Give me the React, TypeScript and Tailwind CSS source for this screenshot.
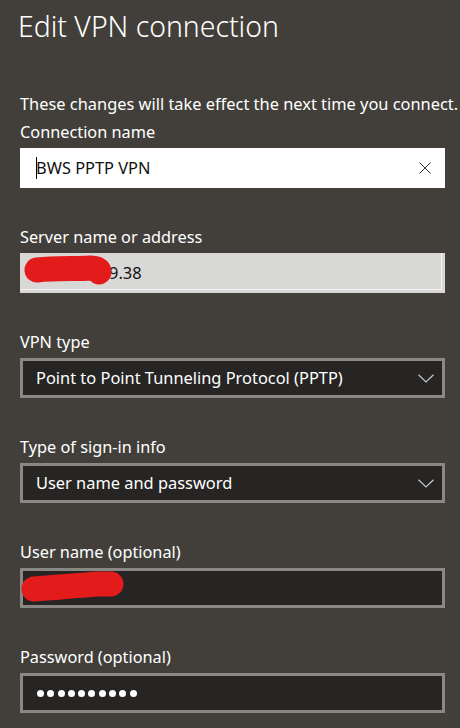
import React from "react";

const font = { fontFamily: '"Noto Sans", "Open Sans", Arial, sans-serif' };

function Label({ children }: { children: React.ReactNode }) {
  return <div className="h-[22px] leading-[22px] text-[16.3px] text-white mb-[5px]">{children}</div>;
}

function Chevron() {
  return (
    <svg width="16" height="9" viewBox="0 0 16 9" className="shrink-0">
      <polyline points="0.5,0.8 8,8 15.5,0.8" fill="none" stroke="#c8c8c8" strokeWidth="1.2" />
    </svg>
  );
}

function Dropdown({ value }: { value: string }) {
  return (
    <div className="h-[40px] w-[425px] border-[3px] border-[#8a8885] bg-[#262524] flex items-center pl-[13px] pr-[8px] justify-between">
      <span className="text-white text-[16.4px] leading-[22px]">{value}</span>
      <Chevron />
    </div>
  );
}

export default function App() {
  return (
    <div style={font} className="w-[460px] h-[728px] bg-[#423f3b] overflow-hidden px-5 pt-[8px]">
      <h1 className="text-[28.4px] leading-[36px] font-light text-white -ml-[2px]">Edit VPN connection</h1>
      <p className="mt-[49px] text-[16.4px] leading-[22px] text-white whitespace-nowrap">
        These changes will take effect the next time you connect.
      </p>

      <div className="mt-[6px]">
        <Label>Connection name</Label>
        <div className="h-[40px] w-[425px] bg-white flex items-center pl-[16px] pr-[14px] justify-between">
          <div className="flex items-center">
            <span className="w-px h-[22px] bg-black -mr-px" />
            <span className="text-[16.4px] leading-[22px] text-[#111]">BWS PPTP VPN</span>
          </div>
          <svg width="12" height="12" viewBox="0 0 12 12">
            <path d="M0.5 0.5 L11.5 11.5 M11.5 0.5 L0.5 11.5" stroke="#333" strokeWidth="1" fill="none" />
          </svg>
        </div>
      </div>

      <div className="mt-[38px]">
        <Label>Server name or address</Label>
        <div className="relative h-[40px] w-[425px] bg-[#d8d8d7] shadow-[inset_-3px_-3px_0_#d8d8d7,inset_-4px_-4px_0_#f2f2f2] flex items-center pl-[89px]">
          <span className="text-[16.4px] leading-[22px] text-[#111]">9.38</span>
          <svg className="absolute left-0 top-0" width="120" height="40" viewBox="0 0 120 40">
            <path d="M17 17 C35 15 58 16 70 15 C77 15 79 17 79 19" stroke="#e31b1b" strokeWidth="25" strokeLinecap="round" fill="none" />
          </svg>
        </div>
      </div>

      <div className="mt-[38px]">
        <Label>VPN type</Label>
        <Dropdown value="Point to Point Tunneling Protocol (PPTP)" />
      </div>

      <div className="mt-[38px]">
        <Label>Type of sign-in info</Label>
        <Dropdown value="User name and password" />
      </div>

      <div className="mt-[38px]">
        <Label>User name (optional)</Label>
        <div className="relative h-[40px] w-[425px] border-[3px] border-[#8a8885] bg-[#262524]">
          <svg className="absolute -left-[3px] -top-[3px]" width="130" height="40" viewBox="0 0 130 40">
            <path d="M14 21 C35 20 58 17 80 16 C86 16 90 16 91 16" stroke="#e31b1b" strokeWidth="25" strokeLinecap="round" fill="none" />
          </svg>
        </div>
      </div>

      <div className="mt-[38px]">
        <Label>Password (optional)</Label>
        <div className="h-[40px] w-[425px] border-[3px] border-[#8a8885] bg-[#262524] flex items-center pl-[14px] gap-[3.3px]">
          {Array.from({ length: 10 }).map((_, i) => (
            <span key={i} className="w-[7px] h-[7px] rounded-full bg-white" />
          ))}
        </div>
      </div>
    </div>
  );
}
